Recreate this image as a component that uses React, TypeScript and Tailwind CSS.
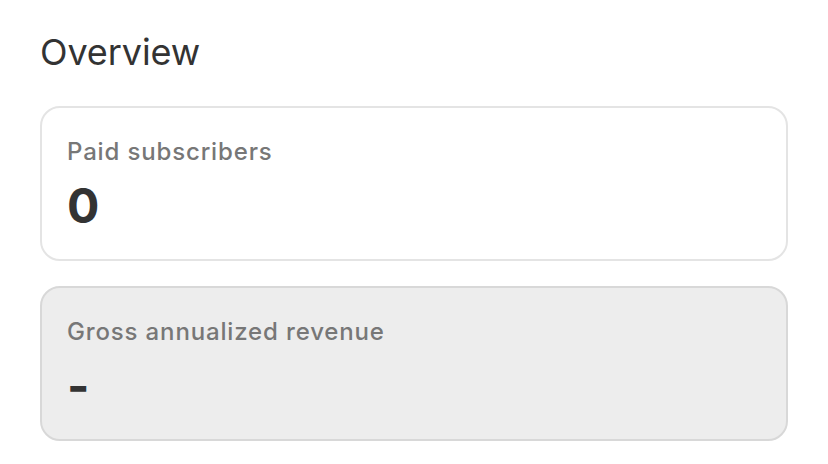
export default function App() {
  return (
    <div className="w-[828px] h-[464px] bg-white px-10 pt-[30px]" style={{ fontFamily: 'Inter, "Noto Sans", sans-serif' }}>
      <h1 className="text-[36px] leading-[44px] text-[#333333] font-normal tracking-[-0.1px]">Overview</h1>
      <div className="mt-[32px] flex flex-col gap-[25px]">
        <div className="h-[155px] rounded-[20px] border-2 border-[#e4e4e4] bg-white px-[25px] pt-[28px]">
          <div className="text-[24px] leading-[32px] font-medium text-[#777777] tracking-[0.85px]">Paid subscribers</div>
          <div className="mt-[14px] text-[48px] leading-[48px] font-bold text-[#333333]">0</div>
        </div>
        <div className="h-[155px] rounded-[20px] border-2 border-[#d8d8d8] bg-[#ededed] px-[25px] pt-[28px]">
          <div className="text-[24px] leading-[32px] font-medium text-[#777777] tracking-[0.85px]">Gross annualized revenue</div>
          <div className="mt-[14px] text-[48px] leading-[48px] font-bold text-[#333333]">-</div>
        </div>
      </div>
    </div>
  );
}
